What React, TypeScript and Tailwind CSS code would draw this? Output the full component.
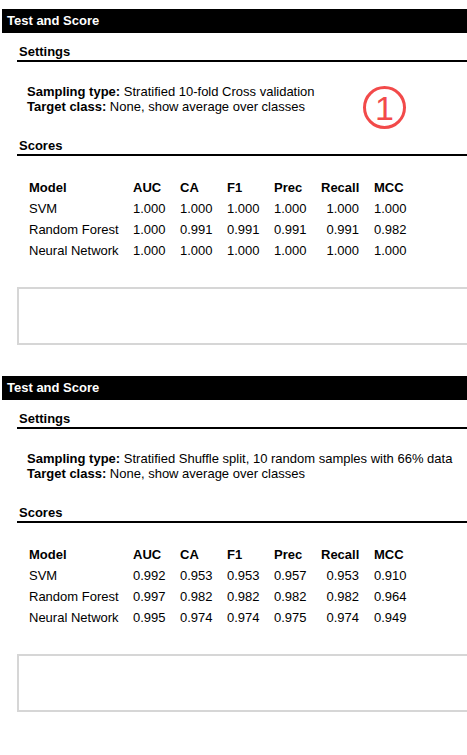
const font = { fontFamily: '"Liberation Sans", Arial, sans-serif' };

type Row = [string, string, string, string, string, string, string];

const cols = ['Model', 'AUC', 'CA', 'F1', 'Prec', 'Recall', 'MCC'];

function Heading({ title }: { title: string }) {
  return (
    <div className="ml-[17px] pl-[2px] border-b-2 border-black text-[13px] leading-[16px] font-bold text-black">
      {title}
    </div>
  );
}

function ScoreTable({ rows }: { rows: Row[] }) {
  const all: string[][] = [cols, ...rows];
  return (
    <div className="ml-[29px] text-[13px] leading-[21px] text-black">
      {all.map((r, i) => (
        <div key={i} className={'grid grid-cols-[104px_47px_47px_47px_47px_38px_auto] ' + (i === 0 ? 'font-bold' : '')}>
          {r.map((c, j) => (
            <div key={j} className={j === 5 ? 'text-right' : j === 6 ? 'pl-[15px]' : ''}>
              {c}
            </div>
          ))}
        </div>
      ))}
    </div>
  );
}

function Section({ sampling, rows, mark }: { sampling: string; rows: Row[]; mark?: boolean }) {
  return (
    <div className="relative">
      <div className="ml-[2px] h-[24px] bg-black pl-[5px] text-[13px] leading-[24px] font-bold text-white">
        Test and Score
      </div>
      <div className="mt-[11px]">
        <Heading title="Settings" />
      </div>
      <div className="mt-[22px] pl-[27px] text-[13px] leading-[15px] text-black">
        <div>
          <span className="font-bold">Sampling type:</span> {sampling}
        </div>
        <div>
          <span className="font-bold">Target class:</span> None, show average over classes
        </div>
      </div>
      <div className="mt-[24px]">
        <Heading title="Scores" />
      </div>
      <div className="mt-[21px]">
        <ScoreTable rows={rows} />
      </div>
      <div className="mt-[26px] ml-[17px] h-[58px] w-[470px] border-2 border-[#d6d6d6] bg-white" />
      {mark && (
        <div className="absolute left-[363px] top-[77px] flex h-[43px] w-[43px] items-center justify-center rounded-full border-[3px] border-[#f24a4a] pt-[1px] text-[34px] leading-none text-[#f24a4a]">
          1
        </div>
      )}
    </div>
  );
}

export default function App() {
  return (
    <div className="min-h-[755px] w-[467px] overflow-hidden bg-white pt-[9px]" style={font}>
      <Section
        mark
        sampling="Stratified 10-fold Cross validation"
        rows={[
          ['SVM', '1.000', '1.000', '1.000', '1.000', '1.000', '1.000'],
          ['Random Forest', '1.000', '0.991', '0.991', '0.991', '0.991', '0.982'],
          ['Neural Network', '1.000', '1.000', '1.000', '1.000', '1.000', '1.000'],
        ]}
      />
      <div className="mt-[31px]">
        <Section
          sampling="Stratified Shuffle split, 10 random samples with 66% data"
          rows={[
            ['SVM', '0.992', '0.953', '0.953', '0.957', '0.953', '0.910'],
            ['Random Forest', '0.997', '0.982', '0.982', '0.982', '0.982', '0.964'],
            ['Neural Network', '0.995', '0.974', '0.974', '0.975', '0.974', '0.949'],
          ]}
        />
      </div>
    </div>
  );
}
